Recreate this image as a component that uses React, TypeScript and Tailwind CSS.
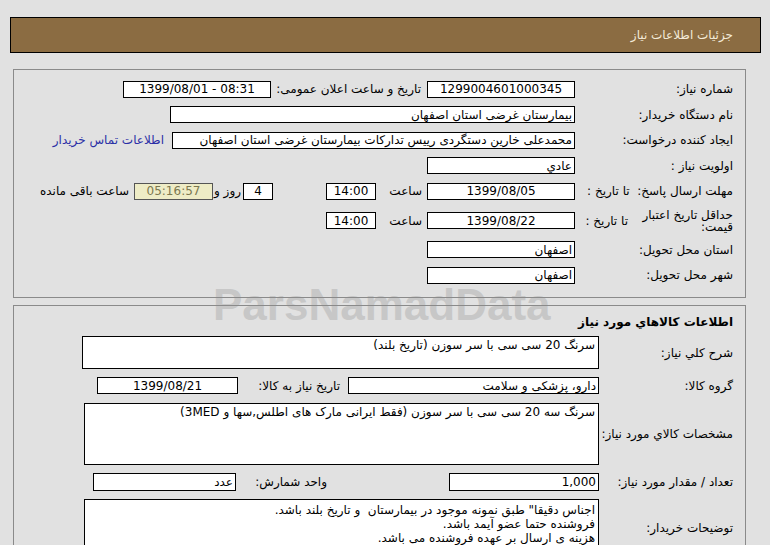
export default function App() {
  const box = "flex h-[17px] shrink-0 items-center border border-black bg-white";

  return (
    <div
      dir="rtl"
      className="relative h-[545px] w-[770px] overflow-hidden bg-[#e1e1e1] pt-[17px] font-['DejaVu_Sans',sans-serif] text-[12px] leading-[14px] text-black"
    >
      {/* page title bar */}
      <div className="mr-[9px] flex h-[36px] w-[751px] items-center border border-black bg-[#8b6c42] pr-[27px] text-[12px] text-[#f3ead8]">
        جزئیات اطلاعات نیاز
      </div>

      {/* general info */}
      <div className="mr-[24px] mt-[16px] h-[229px] w-[733px] border border-[#8a8a8a] pt-[6px]">
        <div className="flex h-[26px] items-center">
          <div className="w-[170px] shrink-0 pr-[12px]">شماره نیاز:</div>
          <div className={`${box} w-[148px] justify-center`}>1299004601000345</div>
          <div className="w-[156px] shrink-0 whitespace-nowrap pr-[6px]">تاریخ و ساعت اعلان عمومی:</div>
          <div className={`${box} w-[148px] justify-center`}>
            <span dir="ltr">1399/08/01 - 08:31</span>
          </div>
        </div>

        <div className="flex h-[25px] items-center">
          <div className="w-[170px] shrink-0 pr-[12px]">نام دستگاه خریدار:</div>
          <div className={`${box} w-[405px] pr-[2px]`}>بیمارستان غرضی استان اصفهان</div>
        </div>

        <div className="flex h-[26px] items-center">
          <div className="w-[170px] shrink-0 pr-[12px]">ایجاد کننده درخواست:</div>
          <div className={`${box} w-[403px] overflow-hidden whitespace-nowrap pr-[2px]`}>
            محمدعلی خارین دستگردی رییس تدارکات بیمارستان غرضی استان اصفهان
          </div>
          <a className="mr-[8px] whitespace-nowrap text-[#2b2fa6]">اطلاعات تماس خریدار</a>
        </div>

        <div className="flex h-[25px] items-center">
          <div className="w-[170px] shrink-0 pr-[12px]">اولویت نیاز :</div>
          <div className={`${box} w-[148px] pr-[2px]`}>عادي</div>
        </div>

        <div className="flex h-[26px] items-center">
          <div className="w-[170px] shrink-0 whitespace-pre pr-[12px]">مهلت ارسال پاسخ:  تا تاریخ :</div>
          <div className={`${box} w-[148px] justify-center`}>1399/08/05</div>
          <div className="w-[51px] shrink-0 pr-[5px]">ساعت</div>
          <div className={`${box} w-[50px] justify-center`}>14:00</div>
          <div className={`${box} mr-[53px] w-[30px] justify-center`}>4</div>
          <div className="w-[30px] shrink-0 whitespace-nowrap pr-[2px]">روز و</div>
          <div className="flex h-[17px] w-[79px] shrink-0 items-center justify-center border border-[#555] bg-[#eeecc6] text-[#7b7850]">
            05:16:57
          </div>
          <div className="mr-[5px] whitespace-nowrap">ساعت باقی مانده</div>
        </div>

        <div className="flex h-[33px] items-center">
          <div className="flex w-[170px] shrink-0 items-center pr-[12px]">
            <div className="w-[98px] leading-[12px]">حداقل تاریخ اعتبار قیمت:</div>
            <div className="mr-[7px] whitespace-nowrap">تا تاریخ :</div>
          </div>
          <div className={`${box} w-[148px] justify-center`}>1399/08/22</div>
          <div className="w-[51px] shrink-0 pr-[5px]">ساعت</div>
          <div className={`${box} w-[50px] justify-center`}>14:00</div>
        </div>

        <div className="flex h-[25px] items-center">
          <div className="w-[170px] shrink-0 pr-[12px]">استان محل تحویل:</div>
          <div className={`${box} w-[148px] pr-[2px]`}>اصفهان</div>
        </div>

        <div className="flex h-[26px] items-center">
          <div className="w-[170px] shrink-0 pr-[12px]">شهر محل تحویل:</div>
          <div className={`${box} w-[148px] pr-[2px]`}>اصفهان</div>
        </div>
      </div>

      {/* goods info */}
      <div className="mr-[24px] mt-[7px] h-[260px] w-[733px] border border-[#8a8a8a] pt-[9px]">
        <div className="pr-[12px] font-bold">اطلاعات کالاهاي مورد نیاز</div>

        <div className="mt-[7px] flex items-center">
          <div className="w-[146px] shrink-0 pr-[12px]">شرح کلي نیاز:</div>
          <div className="h-[33px] w-[517px] shrink-0 border border-black bg-white pr-[3px] pt-[1px]">
            سرنگ 20 سی سی با سر سوزن (تاریخ بلند)
          </div>
        </div>

        <div className="mt-[8px] flex items-center">
          <div className="w-[146px] shrink-0 pr-[12px]">گروه کالا:</div>
          <div className={`${box} w-[251px] pr-[2px]`}>دارو، پزشکی و سلامت</div>
          <div className="w-[110px] shrink-0 whitespace-nowrap pr-[8px]">تاریخ نیاز به کالا:</div>
          <div className={`${box} w-[141px] justify-center`}>1399/08/21</div>
        </div>

        <div className="mt-[9px] flex items-center">
          <div className="w-[146px] shrink-0 whitespace-nowrap pr-[12px]">مشخصات کالاي مورد نیاز:</div>
          <div className="h-[62px] w-[515px] shrink-0 border border-black bg-white pr-[3px] pt-[1px]">
            سرنگ سه 20 سی سی با سر سوزن (فقط ایرانی مارک های اطلس,سها و 3MED)
          </div>
        </div>

        <div className="mt-[8px] flex items-center">
          <div className="w-[146px] shrink-0 whitespace-nowrap pr-[12px]">تعداد / مقدار مورد نیاز:</div>
          <div className={`${box} h-[18px] w-[150px] pr-[2px]`}>1,000</div>
          <div className="w-[213px] shrink-0 whitespace-nowrap pr-[122px]">واحد شمارش:</div>
          <div className={`${box} h-[18px] w-[143px] pr-[2px]`}>عدد</div>
        </div>

        <div className="mt-[8px] flex items-center">
          <div className="w-[146px] shrink-0 pr-[12px]">توضیحات خریدار:</div>
          <div className="h-[58px] w-[515px] shrink-0 whitespace-pre-wrap border border-black bg-white pr-[3px] pt-[3px]">
            {'اجناس دقیقا" طبق نمونه موجود در بیمارستان  و تاریخ بلند باشد.\nفروشنده حتما عضو آیمد باشد.\nهزینه ی ارسال بر عهده فروشنده می باشد.'}
          </div>
        </div>
      </div>

      {/* watermark */}
      <div
        dir="ltr"
        className="pointer-events-none absolute left-[213px] top-[283px] font-['Liberation_Sans',sans-serif] text-[44px] font-bold leading-none text-[#8c8c8c] opacity-30"
      >
        ParsNamadData
      </div>
    </div>
  );
}
